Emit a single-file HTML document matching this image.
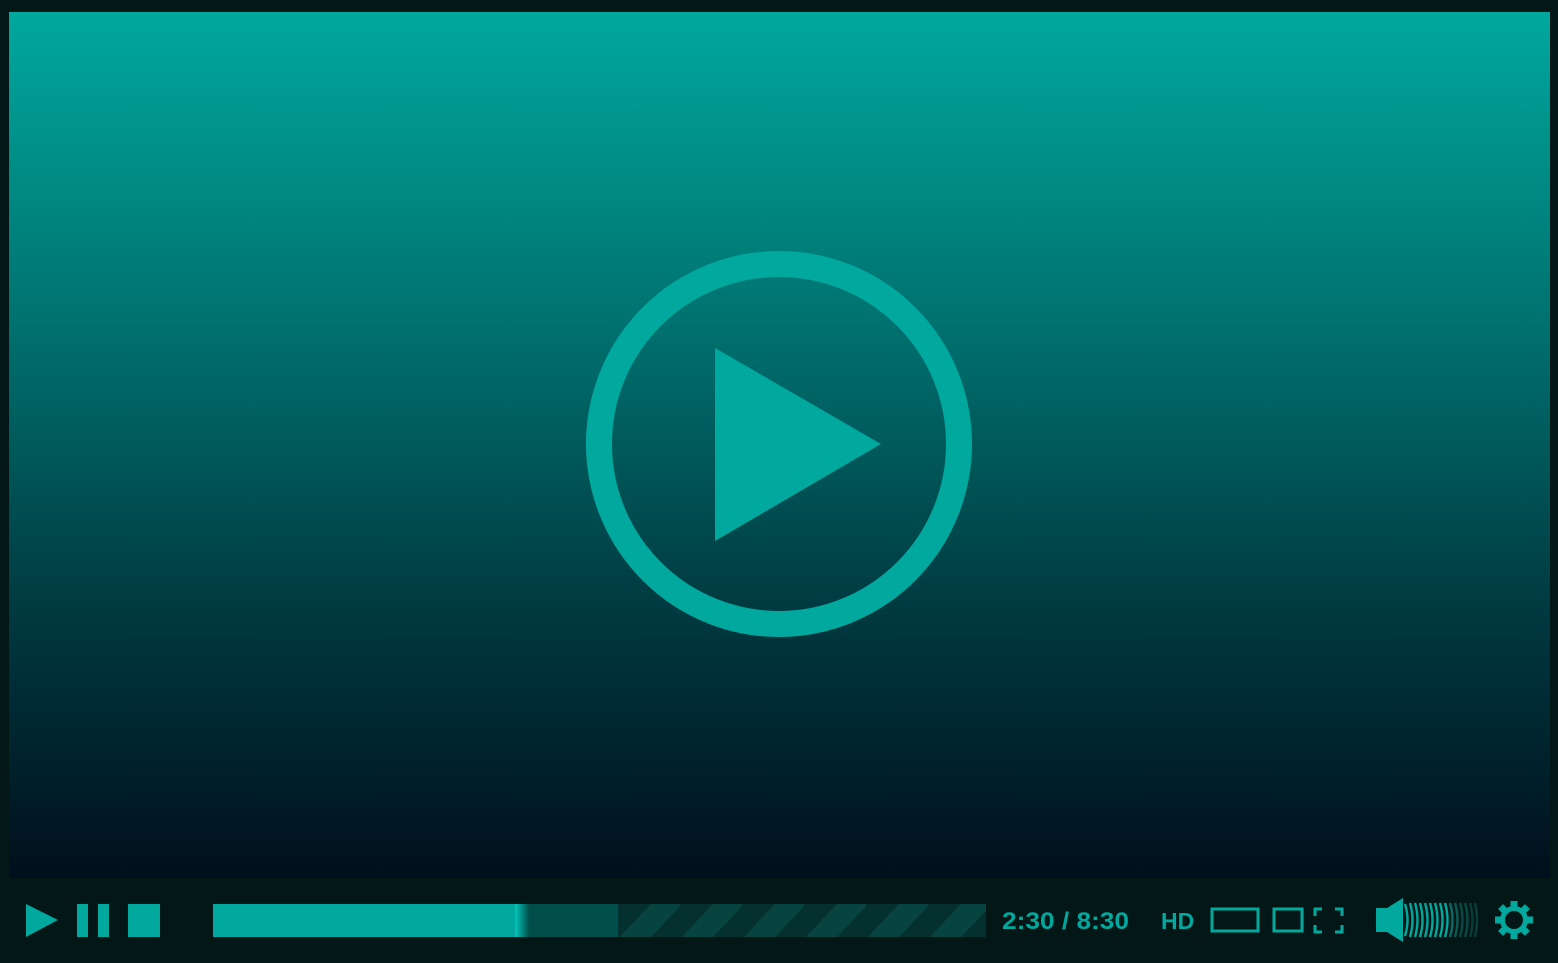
<!DOCTYPE html>
<html><head><style>
html,body{margin:0;padding:0;width:1558px;height:963px;background:#041717;overflow:hidden;font-family:"Liberation Sans",sans-serif}
.v{position:absolute;left:9px;top:12px;width:1541px;height:866px;background:linear-gradient(#00a89e 0%,#006e6c 38%,#00383f 70%,#010f1c 100%)}
</style></head><body>
<div class="v"></div>
<svg width="1558" height="963" style="position:absolute;left:0;top:0">
<defs>
<pattern id="st" patternUnits="userSpaceOnUse" width="62" height="33" x="618" y="904">
<rect width="62" height="33" fill="#04302f"/>
<polygon points="33,0 64,0 33,33 2,33" fill="#07443f"/>
<polygon points="95,0 126,0 95,33 64,33" fill="#07443f" transform="translate(-62,0)"/>
</pattern>
<linearGradient id="gl" x1="0" x2="1"><stop offset="0" stop-color="#00c8bc"/><stop offset="1" stop-color="#004f4b"/></linearGradient>
</defs>
<circle cx="779" cy="444" r="180" fill="none" stroke="#00a89e" stroke-width="26"/>
<polygon points="715,348 881,444 715,541" fill="#00a89e"/>
<polygon points="26,904 58,920 26,937" fill="#00a89e"/>
<rect x="77" y="904" width="11" height="33" fill="#00a89e"/>
<rect x="98" y="904" width="11" height="33" fill="#00a89e"/>
<rect x="128" y="904" width="32" height="33" fill="#00a89e"/>
<rect x="618" y="904" width="368" height="33" fill="url(#st)"/>
<rect x="515" y="904" width="103" height="33" fill="#004f4b"/>
<rect x="515" y="904" width="14" height="33" fill="url(#gl)"/>
<rect x="213" y="904" width="302" height="33" fill="#00a89e"/>
<text x="1002" y="929" font-size="24" font-weight="bold" fill="#00a89e" textLength="127" lengthAdjust="spacingAndGlyphs">2:30 / 8:30</text>
<text x="1161" y="929" font-size="23" font-weight="bold" fill="#00a89e">HD</text>
<rect x="1212" y="909" width="46" height="22" fill="none" stroke="#00a89e" stroke-width="3"/>
<rect x="1274" y="909" width="28" height="22" fill="none" stroke="#00a89e" stroke-width="3"/>
<path d="M1315,916v-7h7M1335,909h7v7M1342,925v7h-7M1322,932h-7v-7" fill="none" stroke="#00a89e" stroke-width="3"/>
<polygon points="1376,908 1387,908 1403,898 1403,942 1387,932 1376,932" fill="#00a89e"/>
<g fill="none" stroke-width="2.4">
<path d="M1405,904q5,16 0,32" stroke="#00a89e"/>
<path d="M1410,903q5,17 0,34" stroke="#00a89e"/>
<path d="M1415,903q5,17 0,34" stroke="#00a89e"/>
<path d="M1420,903q5,17 0,34" stroke="#00a89e"/>
<path d="M1425,903q5,17 0,34" stroke="#00a89e"/>
<path d="M1430,903q5,17 0,34" stroke="#00a89e"/>
<path d="M1435,903q5,17 0,34" stroke="#00a89e"/>
<path d="M1440,903q5,17 0,34" stroke="#00a89e"/>
<path d="M1445,903q5,17 0,34" stroke="#00a89e"/>
<path d="M1450,903q5,17 0,34" stroke="#0a6b66"/>
<path d="M1455,903q5,17 0,34" stroke="#0a5a55"/>
<path d="M1460,903q5,17 0,34" stroke="#0a4a46"/>
<path d="M1465,903q5,17 0,34" stroke="#0a4a46"/>
<path d="M1470,903q5,17 0,34" stroke="#0a3d3a"/>
<path d="M1475,903q4,17 0,34" stroke="#0a3d3a"/>
</g>
<g transform="translate(1514,920)" fill="#00a89e">
<g id="t"><rect x="-3.5" y="-19" width="7" height="7"/></g>
<use href="#t" transform="rotate(45)"/><use href="#t" transform="rotate(90)"/><use href="#t" transform="rotate(135)"/>
<use href="#t" transform="rotate(180)"/><use href="#t" transform="rotate(225)"/><use href="#t" transform="rotate(270)"/><use href="#t" transform="rotate(315)"/>
<circle r="11.5" fill="none" stroke="#00a89e" stroke-width="5"/>
</g>
</svg>
</body></html>
